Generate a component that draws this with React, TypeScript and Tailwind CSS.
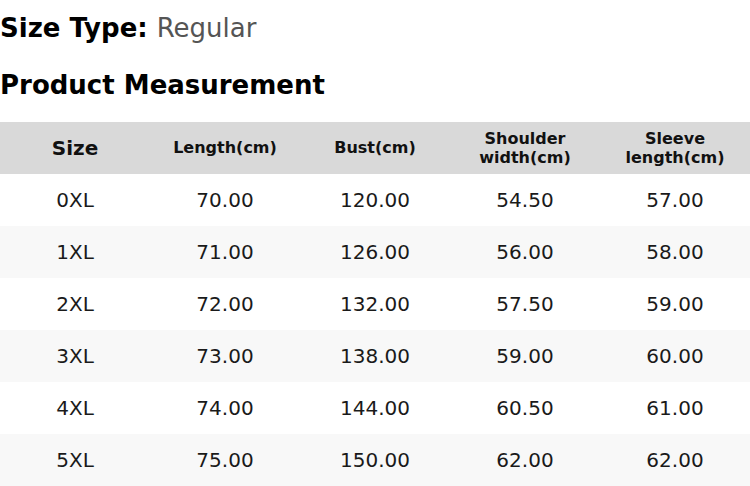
const rows = [
  ["0XL", "70.00", "120.00", "54.50", "57.00"],
  ["1XL", "71.00", "126.00", "56.00", "58.00"],
  ["2XL", "72.00", "132.00", "57.50", "59.00"],
  ["3XL", "73.00", "138.00", "59.00", "60.00"],
  ["4XL", "74.00", "144.00", "60.50", "61.00"],
  ["5XL", "75.00", "150.00", "62.00", "62.00"],
];

export default function App() {
  return (
    <div className="w-[750px] h-[486px] overflow-hidden bg-white text-black font-['DejaVu_Sans',sans-serif]">
      <div className="h-[56px] flex items-center text-[26px] leading-none">
        <span className="font-bold">Size Type:</span>
        <span className="ml-[9px] text-[#555555]">Regular</span>
      </div>
      <div className="h-[56px] flex items-center text-[26px] leading-none font-bold pt-[2px]">
        Product Measurement
      </div>
      <div className="h-[10px]" />
      <div className="grid grid-cols-5 h-[52px] bg-[#d9d9d9] font-bold text-[#111111] items-center text-center">
        <div className="text-[20px] leading-none">Size</div>
        <div className="text-[16px] leading-none">Length(cm)</div>
        <div className="text-[16px] leading-none">Bust(cm)</div>
        <div className="text-[16px] leading-[19px]">Shoulder<br />width(cm)</div>
        <div className="text-[16px] leading-[19px]">Sleeve<br />length(cm)</div>
      </div>
      {rows.map((r, i) => (
        <div
          key={i}
          className={`grid grid-cols-5 h-[52px] items-center text-center text-[20px] leading-none text-[#1a1a1a] ${i % 2 === 1 ? "bg-[#f8f8f8]" : "bg-white"}`}
        >
          {r.map((c, j) => (
            <div key={j}>{c}</div>
          ))}
        </div>
      ))}
    </div>
  );
}
